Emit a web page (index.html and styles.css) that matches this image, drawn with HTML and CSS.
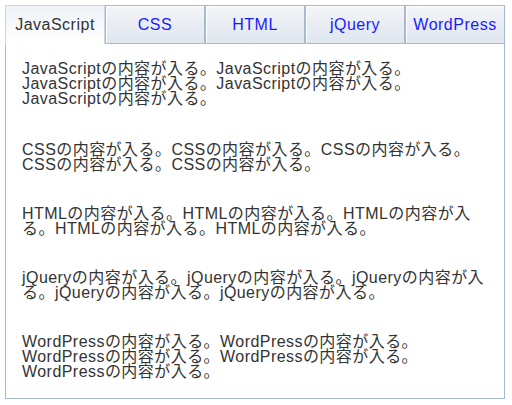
FILE: index.html
```html
<!doctype html>
<html>
<head>
<meta charset="utf-8">
<meta name="viewport" content="width=device-width, initial-scale=1">
<title>タブ</title>
<link rel="stylesheet" href="styles.css">
</head>

<body>
<div class="tabbox">
	<ul class="tabs">
		<li class="active"><a href="#js">JavaScript</a></li>
		<li><a href="#css">CSS</a></li>
		<li><a href="#html">HTML</a></li>
		<li><a href="#jquery">jQuery</a></li>
		<li><a href="#wp">WordPress</a></li>
	</ul>
	<div class="panel">
		<p id="js">JavaScriptの内容が入る。JavaScriptの内容が入る。JavaScriptの内容が入る。JavaScriptの内容が入る。JavaScriptの内容が入る。</p>
		<p id="css">CSSの内容が入る。CSSの内容が入る。CSSの内容が入る。CSSの内容が入る。CSSの内容が入る。</p>
		<p id="html">HTMLの内容が入る。HTMLの内容が入る。HTMLの内容が入る。HTMLの内容が入る。HTMLの内容が入る。</p>
		<p id="jquery">jQueryの内容が入る。jQueryの内容が入る。jQueryの内容が入る。jQueryの内容が入る。jQueryの内容が入る。</p>
		<p id="wp">WordPressの内容が入る。WordPressの内容が入る。WordPressの内容が入る。WordPressの内容が入る。WordPressの内容が入る。</p>
	</div>
</div>
</body>
</html>
```

FILE: styles.css
```css
body{
	margin:0;
	background-color:#fff;
	color:#333;
	font-family:"Liberation Sans", "Noto Sans CJK JP", sans-serif;
	}
.tabbox{
	width:500px;
	margin:5px;
	}
.tabs{
	display:flex;
	margin:0;
	padding:0;
	list-style:none;
	}
.tabs li{
	width:100px;
	}
.tabs li a{
	display:block;
	height:37px;
	line-height:37px;
	text-align:center;
	font-size:16px;
	letter-spacing:0.5px;
	color:#1a1aff;
	text-decoration:none;
	border:1px solid #a5b9d2;
	background:linear-gradient(#f3f5f8, #dfe6ee);
	box-shadow:inset 1px 1px 0 #fff;
	}
.tabs li.active a{
	color:#333;
	border-color:#c9d6e5;
	border-bottom-color:#fff;
	background:linear-gradient(#eef2f6, #fff);
	box-shadow:none;
	}
.panel{
	border:1px solid #a5b9d2;
	border-top:none;
	padding:17px 17px 19px 16px;
	font-size:16px;
	letter-spacing:0.45px;
	line-height:15px;
	}
.panel p{
	margin:0 0 34px;
	}
.panel p:first-child{
	margin-bottom:36px;
	}
.panel p:last-child{
	margin-bottom:0;
	}
```
